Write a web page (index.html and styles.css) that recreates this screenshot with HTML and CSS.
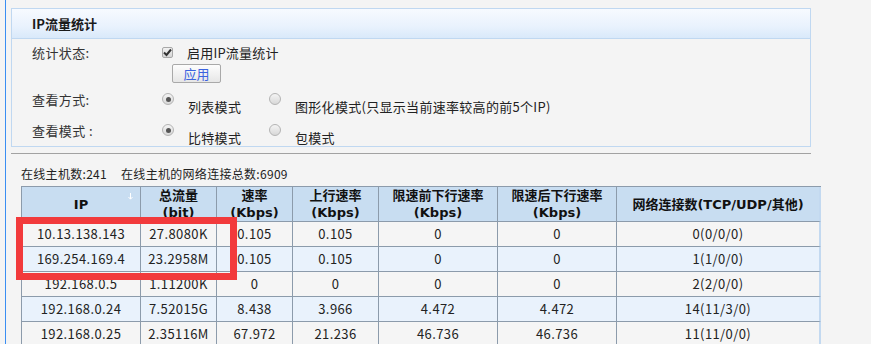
FILE: index.html
```html
<!DOCTYPE html>
<html lang="zh-CN">
<head>
    <meta charset="UTF-8">
    <meta name="viewport" content="width=device-width, initial-scale=1.0">
    <title>IP流量统计</title>
    <link rel="stylesheet" href="styles.css">
</head>

<body>
    <div class="page">
        <div class="panel">
            <div class="panel-head">IP流量统计</div>
            <div class="panel-body">
                <div class="row">
                    <span class="label">统计状态:</span>
                    <span class="check">
                        <svg width="9" height="9" viewBox="0 0 9 9"><path d="M1 4.5 L3.5 7 L8 1.5" fill="none" stroke="#333" stroke-width="2"/></svg>
                    </span>
                    <span class="check-text">启用IP流量统计</span>
                </div>
                <div class="row row-btn">
                    <button class="btn">应用</button>
                </div>
                <div class="row">
                    <span class="label">查看方式:</span>
                    <span class="option"><span class="radio on"></span><span class="opt-text">列表模式</span></span>
                    <span class="option"><span class="radio"></span><span class="opt-text">图形化模式(只显示当前速率较高的前5个IP)</span></span>
                </div>
                <div class="row">
                    <span class="label">查看模式 :</span>
                    <span class="option"><span class="radio on"></span><span class="opt-text">比特模式</span></span>
                    <span class="option"><span class="radio"></span><span class="opt-text">包模式</span></span>
                </div>
            </div>
        </div>

        <div class="divider"></div>

        <div class="stats">
            <p class="summary">在线主机数:241<span class="gap"></span>在线主机的网络连接总数:6909</p>
            <div class="table-wrap">
                <table class="hosts">
                    <colgroup>
                        <col class="c-ip">
                        <col class="c-total">
                        <col class="c-rate">
                        <col class="c-up">
                        <col class="c-down">
                        <col class="c-down">
                        <col class="c-conn">
                    </colgroup>
                    <thead>
                        <tr>
                            <th class="th-ip">IP
                                <svg class="sort" width="5" height="7" viewBox="0 0 5 7"><path d="M2.5 0 V6 M0.5 4 L2.5 6.2 L4.5 4" fill="none" stroke="#fff" stroke-width="1"/></svg>
                            </th>
                            <th>总流量<br>(bit)</th>
                            <th>速率<br>(Kbps)</th>
                            <th>上行速率<br>(Kbps)</th>
                            <th>限速前下行速率<br>(Kbps)</th>
                            <th>限速后下行速率<br>(Kbps)</th>
                            <th class="last">网络连接数(TCP/UDP/其他)</th>
                        </tr>
                    </thead>
                    <tbody>
                        <tr>
                            <td>10.13.138.143</td><td>27.8080K</td><td>0.105</td><td>0.105</td><td>0</td><td>0</td><td class="last">0(0/0/0)</td>
                        </tr>
                        <tr class="alt">
                            <td>169.254.169.4</td><td>23.2958M</td><td>0.105</td><td>0.105</td><td>0</td><td>0</td><td class="last">1(1/0/0)</td>
                        </tr>
                        <tr>
                            <td>192.168.0.5</td><td>1.11200K</td><td>0</td><td>0</td><td>0</td><td>0</td><td class="last">2(2/0/0)</td>
                        </tr>
                        <tr class="alt">
                            <td>192.168.0.24</td><td>7.52015G</td><td>8.438</td><td>3.966</td><td>4.472</td><td>4.472</td><td class="last">14(11/3/0)</td>
                        </tr>
                        <tr>
                            <td>192.168.0.25</td><td>2.35116M</td><td>67.972</td><td>21.236</td><td>46.736</td><td>46.736</td><td class="last">11(11/0/0)</td>
                        </tr>
                    </tbody>
                </table>
                <div class="mark"></div>
            </div>
        </div>
    </div>
</body>
</html>
```

FILE: styles.css
```css
*, *:before, *:after {
    box-sizing: border-box;
}

html, body {
    margin: 0;
    height: 100%;
    overflow: hidden;
}

body {
    background-color: #f4f4f4;
    font-family: "Noto Sans CJK SC", "Microsoft YaHei", sans-serif;
    font-size: 13px;
    color: #222;
}

.page {
    margin-left: 5px;
    min-height: 100%;
    border-left: 1px solid #3a8ef2;
    padding: 8px 0 0 5px;
}

/* settings box */
.panel {
    width: 800px;
    border: 1px solid #c0d8f1;
}

.panel-head {
    height: 30px;
    line-height: 29px;
    padding-left: 20px;
    border-bottom: 1px solid #c0d8f1;
    background: linear-gradient(#f7faff, #e9f2fd 60%, #d9e9fa);
    font-weight: bold;
    color: #1a1a1a;
}

.panel-body {
    padding: 4px 0 1px 20px;
}

.row {
    display: flex;
    align-items: flex-start;
    line-height: 20px;
}

.row + .row {
    margin-top: 7px;
}

.row.row-btn {
    margin-top: 1px;
    padding-left: 140px;
}

.label {
    width: 130px;
    flex-shrink: 0;
    color: #333;
    letter-spacing: 0.4px;
}

.check {
    width: 11px;
    height: 11px;
    margin-top: 4px;
    border: 1px solid #a8a8a8;
    border-radius: 2px;
    background: linear-gradient(#f2f2f2, #d6d6d6);
    display: flex;
    align-items: center;
    justify-content: center;
}

.check-text {
    margin-left: 14px;
    letter-spacing: 0.2px;
}

.btn {
    width: 49px;
    height: 19px;
    padding: 0;
    border: 1px solid #a9a9a9;
    border-radius: 2px;
    background: linear-gradient(#fdfdfd, #e6e6e6);
    font-family: inherit;
    font-size: 13px;
    line-height: 17px;
    color: #3b63e0;
}

.option {
    width: 107px;
    display: flex;
    align-items: flex-start;
    flex-shrink: 0;
}

.option + .option {
    width: auto;
}

.radio {
    width: 12px;
    height: 12px;
    margin-top: 3px;
    border: 1px solid #b4b4b4;
    border-radius: 50%;
    background: linear-gradient(#f4f4f4, #d8d8d8);
    display: flex;
    align-items: center;
    justify-content: center;
    flex-shrink: 0;
}

.radio.on:after {
    content: "";
    width: 5px;
    height: 5px;
    border-radius: 50%;
    background-color: #555;
}

.opt-text {
    margin: 10px 0 0 14px;
    line-height: 14px;
    letter-spacing: 0.3px;
}

.divider {
    width: 800px;
    height: 1px;
    margin-top: 6px;
    background-color: #a2a2a2;
}

/* host list */
.stats {
    padding-left: 10px;
}

.summary {
    margin: 12px 0 4px 0;
    font-size: 12px;
    line-height: 16px;
    letter-spacing: 0.3px;
}

.summary .gap {
    display: inline-block;
    width: 14px;
}

.table-wrap {
    position: relative;
    width: 800px;
}

.hosts {
    width: 800px;
    table-layout: fixed;
    border-collapse: separate;
    border-spacing: 0;
    border-top: 1px solid #8c9bab;
    border-left: 1px solid #8c9bab;
}

.c-ip { width: 119px; }
.c-total { width: 76px; }
.c-rate { width: 76px; }
.c-up { width: 86px; }
.c-down { width: 119px; }
.c-conn { width: 204px; }

.hosts th,
.hosts td {
    padding: 0;
    text-align: center;
    vertical-align: middle;
    border-right: 1px solid #8c9bab;
    border-bottom: 1px solid #8c9bab;
    white-space: nowrap;
}

.hosts th {
    line-height: 17px;
    height: 35px;
    background-color: #c8ddf1;
    font-family: "DejaVu Sans", "Noto Sans CJK SC", sans-serif;
    font-weight: bold;
    color: #111;
}

.hosts .th-ip {
    position: relative;
}

.hosts .sort {
    position: absolute;
    top: 6px;
    right: 7px;
}

.hosts td {
    height: 25px;
    line-height: 24px;
    background-color: #f5f5f5;
    letter-spacing: 0.4px;
}

.hosts .alt td {
    background-color: #e9f2fc;
}

.hosts .last {
    border-right-color: #c3d9f0;
    border-right-width: 2px;
}

.mark {
    position: absolute;
    left: -5px;
    top: 31px;
    width: 221px;
    height: 63px;
    border: 7px solid #f23a3c;
}
```
